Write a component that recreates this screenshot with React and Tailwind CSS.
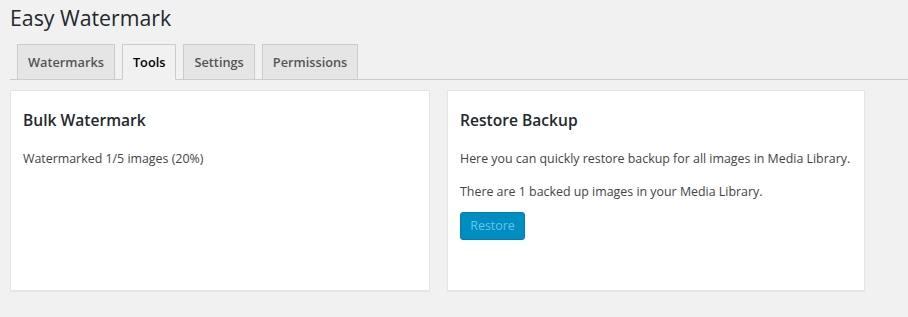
const tabs = ['Watermarks', 'Tools', 'Settings', 'Permissions'];

const Card = ({ title, children }) => (
  <div className="h-[201px] border border-[#e5e5e5] bg-white px-3 shadow-[0_1px_1px_rgba(0,0,0,0.04)]">
    <h2 className="mt-[17px] mb-[17px] text-[15.6px] leading-[24px] font-semibold text-[#23282d]">{title}</h2>
    {children}
  </div>
);

export default function App() {
  return (
    <div className="min-h-screen bg-[#f1f1f1] font-['Open_Sans',sans-serif] text-[#444]">
      <div className="pl-[10px] pt-[3px]">
        <h1 className="h-[41px] text-[21.3px] leading-[30px] font-normal text-[#23282d]">Easy Watermark</h1>

        <nav className="flex border-b border-[#ccc]">
          {tabs.map((tab) => (
            <a
              key={tab}
              className={
                tab === 'Tools'
                  ? '-mb-px ml-[7px] border border-[#ccc] border-b-[#f1f1f1] bg-[#f1f1f1] px-[10px] py-[5px] text-[12.75px] leading-[24px] font-semibold text-black'
                  : '-mb-px ml-[7px] border border-[#ccc] bg-[#e5e5e5] px-[10px] py-[5px] text-[12.75px] leading-[24px] font-semibold text-[#555]'
              }
            >
              {tab}
            </a>
          ))}
        </nav>

        <div className="mt-[10px] flex gap-[17px]">
          <div className="w-[420px]">
            <Card title="Bulk Watermark">
              <p className="text-[12.4px] leading-[19.5px]">Watermarked 1/5 images (20%)</p>
            </Card>
          </div>
          <div className="w-[418px]">
            <Card title="Restore Backup">
              <p className="whitespace-nowrap text-[12.4px] leading-[19.5px]">Here you can quickly restore backup for all images in Media Library.</p>
              <p className="mt-[13px] text-[12.4px] leading-[19.5px]">There are 1 backed up images in your Media Library.</p>
              <button
                disabled
                className="mt-[11px] h-[28px] w-[65px] rounded-[3px] border border-[#007cb2] bg-[#008ec2] text-[12.4px] leading-[26px] text-[#66c6e4]"
              >
                Restore
              </button>
            </Card>
          </div>
        </div>
      </div>
    </div>
  );
}
